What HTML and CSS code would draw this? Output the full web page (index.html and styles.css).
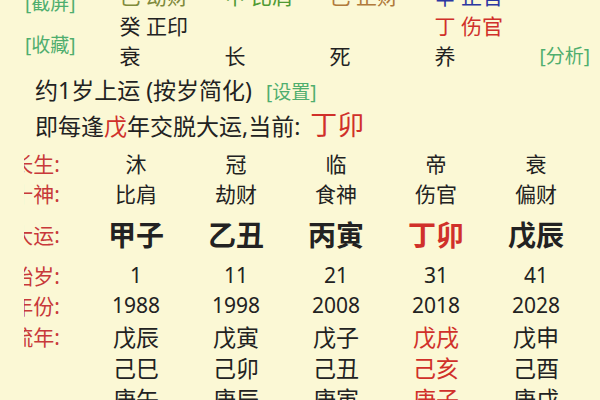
FILE: index.html
```html
<!DOCTYPE html>
<html lang="zh-CN">
<head>
<meta charset="utf-8">
<link rel="stylesheet" href="styles.css">
</head>
<body>
<div class="page">
  <div class="top">
    <div class="side">
      <span class="link">[截屏]</span>
      <span class="link">[收藏]</span>
    </div>
    <div class="pillars">
      <span class="c-olive">己 劫财</span>
      <span class="c-green">甲 比肩</span>
      <span class="c-brown">己 正财</span>
      <span class="c-blue">辛 正官</span>
      <span>癸 正印</span>
      <span></span>
      <span></span>
      <span class="c-red">丁 伤官</span>
      <span>衰</span>
      <span>长</span>
      <span>死</span>
      <span>养</span>
    </div>
    <div class="right">
      <span class="link">[分析]</span>
    </div>
  </div>
  <div class="line l1">约1岁上运 (按岁简化)<span class="link set">[设置]</span></div>
  <div class="line l2">即每逢<span class="c-red">戊</span>年交脱大运,当前:<span class="cur">丁卯</span></div>

  <div class="table">
    <div class="row r-sm"><div class="lab"><span>长生:</span></div><div class="cell">沐</div><div class="cell">冠</div><div class="cell">临</div><div class="cell">帝</div><div class="cell">衰</div></div>
    <div class="row r-sm"><div class="lab"><span>十神:</span></div><div class="cell">比肩</div><div class="cell">劫财</div><div class="cell">食神</div><div class="cell">伤官</div><div class="cell">偏财</div></div>
    <div class="row r-big"><div class="lab"><span>大运:</span></div><div class="cell">甲子</div><div class="cell">乙丑</div><div class="cell">丙寅</div><div class="cell c-red">丁卯</div><div class="cell">戊辰</div></div>
    <div class="row r-sm"><div class="lab"><span>始岁:</span></div><div class="cell">1</div><div class="cell">11</div><div class="cell">21</div><div class="cell">31</div><div class="cell">41</div></div>
    <div class="row r-sm"><div class="lab"><span>年份:</span></div><div class="cell">1988</div><div class="cell">1998</div><div class="cell">2008</div><div class="cell">2018</div><div class="cell">2028</div></div>
    <div class="row r-yr"><div class="lab"><span>流年:</span></div><div class="cell">戊辰</div><div class="cell">戊寅</div><div class="cell">戊子</div><div class="cell c-red">戊戌</div><div class="cell">戊申</div></div>
    <div class="row r-yr"><div class="lab"></div><div class="cell">己巳</div><div class="cell">己卯</div><div class="cell">己丑</div><div class="cell c-red">己亥</div><div class="cell">己酉</div></div>
    <div class="row r-yr"><div class="lab"></div><div class="cell">庚午</div><div class="cell">庚辰</div><div class="cell">庚寅</div><div class="cell c-red">庚子</div><div class="cell">庚戌</div></div>
  </div>
</div>
</body>
</html>
```

FILE: styles.css
```css
html, body {
  margin: 0;
  padding: 0;
  background: #fbf8d5;
  overflow: hidden;
}
body {
  width: 600px;
  height: 400px;
  font-family: "Noto Sans", "Noto Sans CJK SC", sans-serif;
  color: #222;
}
.page {
  margin-top: -19px;
}
.top {
  display: flex;
  height: 90px;
}
.side {
  width: 127px;
  box-sizing: border-box;
  padding-left: 25px;
  padding-top: 7px;
  display: flex;
  flex-direction: column;
  gap: 12px;
}
.link {
  color: #4fae6e;
  font-size: 19px;
  line-height: 30px;
  white-space: nowrap;
}
.pillars {
  display: grid;
  grid-template-columns: repeat(4, 105px);
  grid-auto-rows: 30px;
  font-size: 21px;
  line-height: 30px;
  white-space: pre;
}
.right {
  margin-left: auto;
  padding-right: 10px;
  align-self: flex-end;
  display: flex;
}
.c-olive { color: #7f8a3c; }
.c-green { color: #4f9a34; }
.c-brown { color: #b07a3c; }
.c-blue { color: #2b37a2; }
.c-red { color: #d0302a; }
.line {
  padding-left: 35px;
  font-size: 23px;
  white-space: nowrap;
}
.l1 {
  height: 38px;
  line-height: 38px;
}
.set {
  margin-left: 14px;
}
.l2 {
  height: 32px;
  line-height: 32px;
}
.cur {
  color: #d0302a;
  font-size: 27px;
  margin-left: 10px;
}
.table {
  margin-top: 7px;
}
.row {
  display: flex;
  align-items: center;
}
.lab {
  margin-left: 24px;
  margin-right: 26px;
  width: 36px;
  overflow: hidden;
  display: flex;
  justify-content: flex-end;
  white-space: nowrap;
  color: #c8393a;
  font-size: 21px;
}
.cell {
  width: 100px;
  text-align: center;
  white-space: nowrap;
}
.r-sm {
  height: 30px;
  font-size: 21px;
}
.r-big {
  height: 52px;
  font-size: 28px;
  font-weight: bold;
}
.r-big .lab {
  font-weight: normal;
  font-size: 21px;
}
.r-yr {
  height: 31px;
  font-size: 23px;
}
.r-yr .lab {
  font-size: 21px;
}
```
